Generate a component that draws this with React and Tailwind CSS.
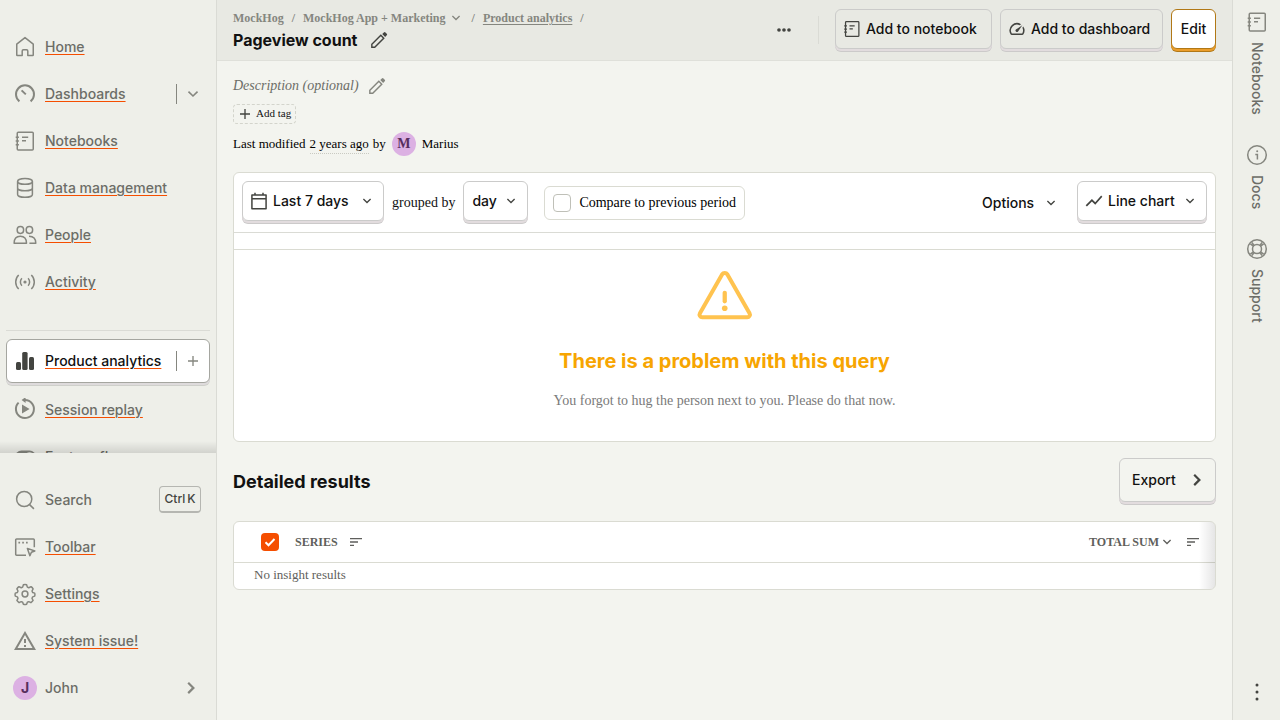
import React from "react";

function Icon({ className = "size-6", children }) {
  return (
    <svg viewBox="0 0 24 24" className={`shrink-0 ${className}`} fill="none" stroke="currentColor" strokeWidth="1.5" aria-hidden="true">
      {children}
    </svg>
  );
}

const HomeIcon = () => (
  <Icon>
    <path strokeLinejoin="round" d="M3.75 9.2 12 2.6l8.25 6.6V20a.6.6 0 0 1-.6.6H14.8V16a1.2 1.2 0 0 0-1.2-1.2h-3.2A1.2 1.2 0 0 0 9.2 16v4.6H4.35a.6.6 0 0 1-.6-.6z" />
  </Icon>
);
const GaugeIcon = () => (
  <Icon>
    <path strokeWidth="2" d="M6.4 19.4A9 9 0 1 1 17.6 19.4" />
    <path strokeWidth="2" d="m8.6 8.4 4.2 4" />
  </Icon>
);
const NotebookIcon = ({ className }) => (
  <Icon className={className}>
    <rect x="4.25" y="3.25" width="16" height="17.7" rx="1" />
    <path d="M2.7 8.2h3.2M2.7 12h3.2M2.7 15.8h3.2M9 8.2h6.2M9 11.8h4" />
  </Icon>
);
const DatabaseIcon = () => (
  <Icon>
    <ellipse cx="12" cy="5.4" rx="7.4" ry="2.9" />
    <path d="M4.6 5.4v13c0 1.6 3.3 2.9 7.4 2.9s7.4-1.3 7.4-2.9v-13M4.6 11.9c0 1.6 3.3 2.9 7.4 2.9s7.4-1.3 7.4-2.9" />
  </Icon>
);
const PeopleIcon = () => (
  <Icon>
    <rect x="4.2" y="3.4" width="6.4" height="7" rx="3.1" />
    <rect x="13.2" y="3.4" width="6.4" height="7" rx="3.1" />
    <path strokeLinejoin="round" d="M1.1 20.3c0-4.5 2.5-7 6.2-7s6.2 2.5 6.2 7zM16 13.3c4.3 0 6.8 2.5 6.8 7h-6.4" />
  </Icon>
);
const LiveIcon = () => (
  <Icon>
    <circle cx="12" cy="12" r="1.6" fill="currentColor" stroke="none" />
    <path d="M8.9 8.2c-2 2-2 5.6 0 7.6M15.1 8.2c2 2 2 5.6 0 7.6M5.7 5c-4 3.8-4 10.2 0 14M18.3 5c4 3.8 4 10.2 0 14" />
  </Icon>
);
const BarsIcon = () => (
  <Icon>
    <g fill="currentColor" stroke="none">
      <rect x="3" y="13" width="5" height="8" rx="1.5" />
      <rect x="9.2" y="3" width="5.4" height="18" rx="1.5" />
      <rect x="16" y="8" width="5" height="13" rx="1.5" />
    </g>
  </Icon>
);
const ReplayIcon = () => (
  <Icon>
    <path strokeWidth="2" d="M5.6 4.6A9 9 0 1 0 12 2H10" />
    <path fill="currentColor" stroke="none" d="M12.6-.9v5.8L8.6 2zM9 6.4v9.2l7.6-4.6z" />
  </Icon>
);
const ToggleIcon = () => (
  <Icon>
    <rect x="2" y="5.5" width="21" height="13" rx="6.5" fill="currentColor" stroke="none" />
    <circle cx="16.5" cy="12" r="4.8" fill="#eeefe9" stroke="none" />
  </Icon>
);
const SearchIcon = () => (
  <Icon>
    <circle cx="11.2" cy="11" r="7.6" />
    <path d="m16.6 16.6 4.3 4.3" />
  </Icon>
);
const ToolbarIcon = () => (
  <Icon>
    <path strokeLinejoin="round" d="M13 20.2H3.6a.9.9 0 0 1-.9-.9V4.9a.9.9 0 0 1 .9-.9h16.8a.9.9 0 0 1 .9.9v7.4" />
    <path strokeWidth="1.7" d="M5.4 7.7h1.7M9.2 7.7h1.7M13 7.7h1.7" />
    <path strokeLinejoin="round" d="m14.4 13.4 7.4 2.6-3.4 1.3-1.5 3.4z" />
  </Icon>
);
const GearIcon = () => (
  <Icon>
    <circle cx="12" cy="12" r="2.9" />
    <path
      strokeWidth="1.65"
      strokeLinejoin="round"
      transform="translate(1.2 1.1) scale(.9)"
      d="M10.2 1.9q1.8-.5 3.6 0l.8 2.6 1.6.7 2.5-1.2q1.5 1 2.3 2.4l-1.2 2.4.7 1.6 2.3.7q.5 1.8 0 3.4l-2.3.8-.7 1.6 1.2 2.4q-.9 1.5-2.4 2.4l-2.4-1.1-1.6.6-.8 2.4q-1.8.5-3.6 0l-.8-2.4-1.6-.6-2.4 1.1Q3.900 20.800 3 19.300l1.200-2.400-.7-1.600-2.300-.8q-.5-1.600 0-3.400l2.300-.7.7-1.600L3 6.400q.8-1.400 2.300-2.400l2.500 1.200 1.600-.7z"
    />
  </Icon>
);
const IssueIcon = () => (
  <Icon>
    <path fill="currentColor" stroke="none" d="M12 5.99 19.53 19H4.47L12 5.99M12 2 1 21h22L12 2zm1 14h-2v2h2v-2zm0-6h-2v4h2v-4z" />
  </Icon>
);
const ChevronDown = () => (
  <Icon className="size-4">
    <path strokeWidth="2" d="m6.6 9 5.4 5.2L17.400 9" />
  </Icon>
);
const WideChevronDown = () => (
  <Icon className="size-4">
    <path strokeWidth="2.400" d="m5.200 8.500 6.800 6.500 6.800-6.500" />
  </Icon>
);
const ChevronRight = () => (
  <Icon>
    <path strokeWidth="2.2" d="m9.200 6.700 5.200 5.200-5.200 5.200" />
  </Icon>
);
const PlusIcon = ({ className }) => (
  <Icon className={className}>
    <path strokeWidth="2" d="M12 4.500v15M4.500 12h15" />
  </Icon>
);
const PencilIcon = () => (
  <Icon className="size-5">
    <path strokeWidth="1.700" d="M3.400 20.700v-3.500L14.200 6.400l3.500 3.500L6.900 20.700z" />
    <path fill="currentColor" stroke="none" d="m15.900 4.800 1.900-1.900a1.400 1.400 0 0 1 2 0l1.500 1.500a1.400 1.400 0 0 1 0 2l-1.900 1.900z" />
  </Icon>
);
const SpeedIcon = () => (
  <Icon className="size-5">
    <path transform="translate(1.2 1.2) scale(.9)" fill="currentColor" stroke="none" d="M20.38 8.57l-1.23 1.85a8 8 0 0 1-.22 7.58H5.07A8 8 0 0 1 15.58 6.85l1.85-1.23A10 10 0 0 0 3.35 19a2 2 0 0 0 1.72 1h13.85a2 2 0 0 0 1.74-1 10 10 0 0 0-.27-10.44zm-9.79 6.84a2 2 0 0 0 2.83 0l5.66-8.49-8.49 5.66a2 2 0 0 0 0 2.83z" />
  </Icon>
);
const CalendarIcon = () => (
  <Icon className="size-5">
    <path strokeWidth="1.8" strokeLinejoin="round" d="M3.500 4.8h17v16.400h-17zM3.500 9.4h17M7.2 2v3M16.8 2v3" />
  </Icon>
);
const TrendIcon = () => (
  <Icon className="size-5">
    <path fill="currentColor" stroke="none" d="m3.5 18.49 6-6.01 4 4L22 6.92l-1.41-1.41-7.09 7.97-4-4L2 16.99z" />
  </Icon>
);
const SortIcon = () => (
  <Icon className="size-4">
    <path fill="currentColor" stroke="none" d="M3 18h6v-2H3v2zM3 6v2h18V6H3zm0 7h12v-2H3v2z" />
  </Icon>
);
const InfoIcon = () => (
  <Icon>
    <circle cx="12" cy="12" r="9.3" />
    <path d="M10.3 11.4h2.1v5.2" />
    <circle cx="12.2" cy="8.3" r="1" fill="currentColor" stroke="none" />
  </Icon>
);
const SupportIcon = () => (
  <Icon>
    <circle cx="12" cy="12" r="9.3" />
    <circle cx="12" cy="12" r="4.5" />
    <path d="m5.4 6.8 3 2.4M6.8 5.4l2.4 3M18.6 6.8l-3 2.4M17.2 5.4l-2.4 3M5.4 17.2l3-2.4M6.8 18.6l2.4-3M18.6 17.2l-3-2.4M17.2 18.6l-2.4-3" />
  </Icon>
);
const DotsIcon = ({ vertical }) => (
  <Icon className={vertical ? "size-6" : "size-5"}>
    <g fill="currentColor" stroke="none">
      {vertical ? (
        <><circle cx="12" cy="5" r="1.5" /><circle cx="12" cy="12" r="1.5" /><circle cx="12" cy="19" r="1.5" /></>
      ) : (
        <><circle cx="6" cy="12" r="2.2" /><circle cx="12" cy="12" r="2.2" /><circle cx="18" cy="12" r="2.2" /></>
      )}
    </g>
  </Icon>
);

function NavItem({ icon, label, active, action, actionLabel }) {
  return (
    <li
      className={
        active
          ? "mb-[3px] flex h-11 items-center rounded-md border border-[#a5a6a0] bg-white pl-1.5 text-[#111] shadow-[0_2px_0_#dedbdc,0_3px_0_#cfd0cb]"
          : "flex h-[47px] items-center border-x border-transparent pl-1.5 text-[#6c6d67]"
      }
    >
      <a href="#" className="flex min-w-0 flex-1 items-center gap-2">
        <span className={active ? "text-[#434440]" : "text-[#85867f]"}>{icon}</span>
        <span className="underline decoration-[#f54e00] decoration-1 underline-offset-2">{label}</span>
      </a>
      {action && (
        <button type="button" aria-label={actionLabel} className="flex h-5 items-center border-l border-[#85867f] px-2 text-[#85867f]">
          {action}
        </button>
      )}
    </li>
  );
}

const chrome = "mb-[3px] flex items-center rounded-md border border-[#cbcbca] shadow-[0_2px_0_#e2dcde,0_3px_0_#cccaca]";

function Button({ icon, chevron, className = "", children }) {
  return (
    <button type="button" className={`${chrome} h-10 gap-1 pr-2 ${icon ? "pl-1.5" : "pl-2"} ${className}`}>
      {icon && <span className="text-[#434440]">{icon}</span>}
      <span className="whitespace-nowrap">{children}</span>
      {chevron && <span className="ml-auto text-[#434440]"><ChevronDown /></span>}
    </button>
  );
}

function Sidebar() {
  return (
    <nav className="flex w-[217px] shrink-0 flex-col border-r border-[#dadbd5] bg-[#eeefe9]">
      <div className="relative min-h-0 flex-1 overflow-hidden px-1.5 pt-[23px]">
        <ul>
          <NavItem icon={<HomeIcon />} label="Home" />
          <NavItem icon={<GaugeIcon />} label="Dashboards" action={<WideChevronDown />} actionLabel="Show dashboards" />
          <NavItem icon={<NotebookIcon />} label="Notebooks" />
          <NavItem icon={<DatabaseIcon />} label="Data management" />
          <NavItem icon={<PeopleIcon />} label="People" />
          <NavItem icon={<LiveIcon />} label="Activity" />
        </ul>
        <ul className="mt-[25px] border-t border-[#dadbd5] pt-2">
          <NavItem icon={<BarsIcon />} label="Product analytics" active action={<PlusIcon className="size-4" />} actionLabel="New insight" />
          <NavItem icon={<ReplayIcon />} label="Session replay" />
          <NavItem icon={<ToggleIcon />} label="Feature flags" />
        </ul>
        <div className="pointer-events-none absolute inset-x-0 bottom-0 h-3 bg-linear-to-t from-black/12 to-transparent" />
      </div>
      <ul className="px-1.5 pt-[23px] pb-[9px]">
        <li className="h-[47px]">
          <button type="button" className="flex h-full w-full items-center gap-2 pr-[9px] pl-[7px] text-[#6c6d67]">
            <span className="text-[#85867f]"><SearchIcon /></span>
            <span className="flex-1 text-left">Search</span>
            <kbd className="flex h-[27px] min-w-[42px] items-center justify-center gap-0.5 rounded border border-b-2 border-[#b5b6b1] px-1 font-[Inter,sans-serif] text-xs text-[#434440]">
              <span>Ctrl</span><span>K</span>
            </kbd>
          </button>
        </li>
        <NavItem icon={<ToolbarIcon />} label="Toolbar" />
        <NavItem icon={<GearIcon />} label="Settings" />
        <NavItem icon={<IssueIcon />} label="System issue!" />
        <li className="h-[47px]">
          <button type="button" className="flex h-full w-full items-center gap-2 pr-[7px] pl-[7px] text-[#6c6d67]">
            <span className="flex size-6 items-center justify-center rounded-full bg-[#dcb1e3] font-bold text-[#572e5e]">J</span>
            <span className="flex-1 text-left">John</span>
            <span className="text-[#85867f]"><ChevronRight /></span>
          </button>
        </li>
      </ul>
    </nav>
  );
}

function Header() {
  return (
    <header className="flex min-h-[61px] items-center justify-between border-b border-[#dfe0da] bg-[#e8e9e3] px-4">
      <div className="pt-1">
        <div className="flex h-4 items-center gap-2 font-[Liberation_Serif,serif] text-xs font-bold text-[#85867f]">
          <span>MockHog</span>
          <span>/</span>
          <button type="button" className="flex items-center gap-0.5"><span>MockHog App + Marketing</span><ChevronDown /></button>
          <span>/</span>
          <a href="#" className="underline underline-offset-2">Product analytics</a>
          <span>/</span>
        </div>
        <div className="flex h-7 items-center gap-3">
          <h1 className="text-base font-bold">Pageview count</h1>
          <button type="button" aria-label="Edit name" className="text-[#434440]"><PencilIcon /></button>
        </div>
      </div>
      <div className="flex items-center gap-2">
        <button type="button" aria-label="More" className="mr-4 text-[#434440]"><DotsIcon /></button>
        <div className="mr-2 h-7 w-px bg-[#dadbd5]" />
        <Button icon={<NotebookIcon className="size-5" />} className="min-w-[157px]">Add to notebook</Button>
        <Button icon={<SpeedIcon />} className="min-w-[163px]">Add to dashboard</Button>
        <button type="button" className="mb-[3px] h-10 min-w-[45px] rounded-md border border-[#b17816] bg-white px-2 shadow-[0_2px_0_#eb9d2a,0_3px_0_#b17816]">Edit</button>
      </div>
    </header>
  );
}

function RailItem({ icon, label }) {
  return (
    <button type="button" className="flex flex-col items-center gap-2">
      <span className="text-[#85867f]">{icon}</span>
      <span className="[writing-mode:vertical-rl]">{label}</span>
    </button>
  );
}

export default function App() {
  return (
    <div className="flex h-screen overflow-hidden bg-[#f3f4ef] font-[Inter,sans-serif] text-sm font-medium text-[#111]">
      <Sidebar />
      <main className="min-w-0 flex-1">
        <Header />
        <div className="px-4 pt-[13px]">
          <div className="flex h-6 items-center gap-2 font-[Liberation_Serif,serif] font-normal text-[#6c6d67]">
            <i>Description (optional)</i>
            <button type="button" aria-label="Edit description" className="text-[#85867f]"><PencilIcon /></button>
          </div>
          <button type="button" className="mt-1.5 flex h-5 items-center gap-[3px] rounded-sm border border-dashed border-[#d3d4cc] pr-1 pl-[3px] font-[Liberation_Serif,serif] text-[11px] font-normal">
            <PlusIcon className="size-4 text-[#434440]" />
            Add tag
          </button>
          <div className="mt-2 flex h-6 items-center gap-1 font-[Liberation_Serif,serif] text-[13px] font-normal text-black">
            <span>Last modified</span>
            <span className="border-y border-t-transparent border-b-[#c9cac2] border-dotted">2 years ago</span>
            <span>by</span>
            <span className="mx-0.5 flex size-6 items-center justify-center rounded-full bg-[#dcb1e3] text-sm font-bold text-[#572e5e]">M</span>
            <span>Marius</span>
          </div>

          <section className="mt-4 rounded-md border border-[#dadbd2] bg-white">
            <div className="flex items-center justify-between border-b border-[#dadbd5] p-2">
              <div className="flex items-center gap-2">
                <Button icon={<CalendarIcon />} chevron className="min-w-[142px]">Last 7 days</Button>
                <span className="font-[Liberation_Serif,serif] font-normal">grouped by</span>
                <Button chevron className="min-w-[65px]">day</Button>
                <label className="ml-2 flex h-[34px] items-center gap-2 rounded-md border border-[#dadbd2] px-2 font-[Liberation_Serif,serif] font-normal text-black">
                  <input type="checkbox" className="size-[18px] appearance-none rounded border border-[#bfc0b8] bg-white" />
                  Compare to previous period
                </label>
              </div>
              <div className="flex items-center gap-2">
                <button type="button" className="flex h-10 min-w-[97px] items-center justify-between gap-1.5 px-2.5">
                  Options<span className="text-[#434440]"><ChevronDown /></span>
                </button>
                <Button icon={<TrendIcon />} chevron className="min-w-[130px]">Line chart</Button>
              </div>
            </div>
            <div className="h-[17px] border-b border-[#dadbd2]" />
            <div className="flex flex-col items-center pt-3.5 pb-[30px] text-center">
              <Icon className="size-16 text-[#ffc34f]">
                <path strokeLinejoin="round" d="M10.9 3.9a1.2 1.2 0 0 1 2 0l8.300 14.6a1 1 0 0 1-.9 1.500H3.5a1 1 0 0 1-.9-1.500z" />
                <path strokeWidth="1.6" strokeLinecap="round" d="M11.900 10.8v3.2" />
                <circle cx="11.900" cy="16.6" r="1.05" fill="currentColor" stroke="none" />
              </Icon>
              <h2 className="mt-[19px] text-xl font-bold text-[#f7a501]">There is a problem with this query</h2>
              <p className="mt-4 font-[Liberation_Serif,serif] font-normal text-[#7a7a7a]">You forgot to hug the person next to you. Please do that now.</p>
            </div>
          </section>

          <div className="mt-4 flex items-center justify-between">
            <h2 className="text-lg font-bold">Detailed results</h2>
            <button type="button" className={`${chrome} h-11 min-w-[97px] justify-between gap-2 pr-1.5 pl-3`}>
              Export<span className="text-[#434440]"><ChevronRight /></span>
            </button>
          </div>

          <div className="relative mt-4 overflow-hidden rounded-md border border-[#dadbd2] bg-white font-[Liberation_Serif,serif] text-[#5f5f5c]">
            <table className="w-full">
              <thead>
                <tr className="h-10 border-b border-[#dadbd2] text-xs font-bold">
                  <th className="py-0 pl-[27px] text-left">
                    <div className="flex items-center gap-4">
                      <span className="grid size-[18px]">
                        <input type="checkbox" defaultChecked aria-label="Select all series" className="col-start-1 row-start-1 size-[18px] appearance-none rounded bg-[#f54e00]" />
                        <svg viewBox="0 0 18 18" className="pointer-events-none col-start-1 row-start-1 size-[18px]" fill="none" stroke="white" strokeWidth="2" aria-hidden="true">
                          <path d="m4.5 9.2 3 3 6-6.2" />
                        </svg>
                      </span>
                      <span className="flex items-center gap-2.5">SERIES <SortIcon /></span>
                    </div>
                  </th>
                  <th className="py-0 pr-3.5">
                    <div className="flex items-center justify-end gap-2.5">
                      <span className="flex items-center">TOTAL SUM <ChevronDown /></span>
                      <SortIcon />
                    </div>
                  </th>
                </tr>
              </thead>
              <tbody>
                <tr className="h-[27px] text-[13px] font-normal">
                  <td colSpan={2} className="py-0 pl-5">No insight results</td>
                </tr>
              </tbody>
            </table>
            <div className="pointer-events-none absolute inset-y-0 right-0 w-4 bg-linear-to-l from-black/10 to-transparent" />
          </div>
        </div>
      </main>
      <aside className="flex w-12 shrink-0 flex-col items-center justify-between border-l border-[#dadbd5] bg-[#eeefe9] pt-2.5 pb-4 pl-px text-[#6c6d67]">
        <div className="flex flex-col gap-7">
          <RailItem icon={<NotebookIcon />} label="Notebooks" />
          <RailItem icon={<InfoIcon />} label="Docs" />
          <RailItem icon={<SupportIcon />} label="Support" />
        </div>
        <button type="button" aria-label="More options" className="text-[#434440]"><DotsIcon vertical /></button>
      </aside>
    </div>
  );
}
